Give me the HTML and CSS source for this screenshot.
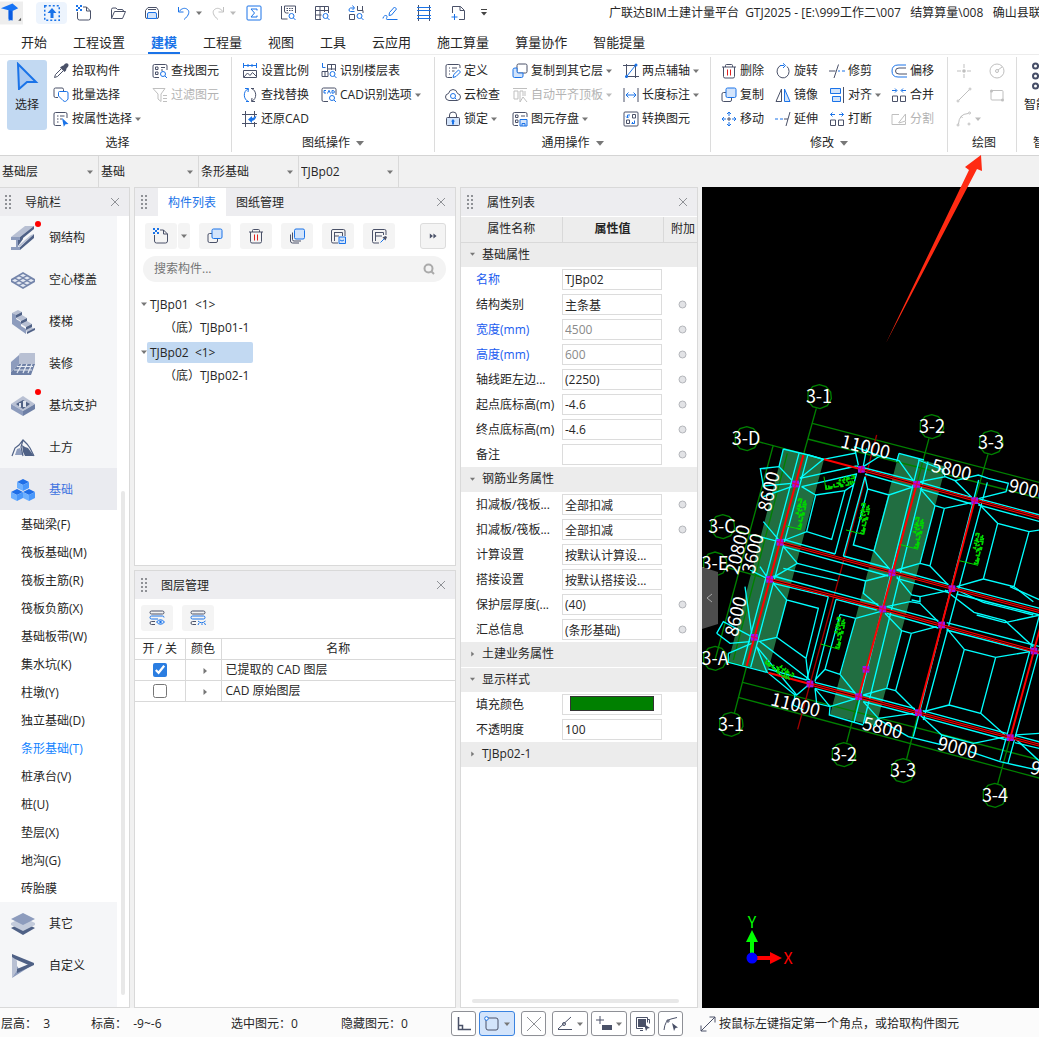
FILE: index.html
```html
<!DOCTYPE html>
<html lang="zh-CN">
<head>
<meta charset="utf-8">
<title>广联达BIM土建计量平台 GTJ2025</title>
<link rel="stylesheet" href="styles.css">
</head>
<body>
<svg class="sprite" aria-hidden="true">
  <symbol id="new" viewBox="0 0 16 16"><path class="k" d="M1.500 7v6q0 2 2 2h9q2 0 2-2V6l-4-4H7M10.500 2v4h4"/><path class="af" d="M0 0h2v2H0zM4 0h2v2H4zM2 2h2v2H2zM0 4h2v2H0zM4 4h2v2H4z"/></symbol>
  <symbol id="open" viewBox="0 0 16 16"><path class="k" d="M2.500 13.500h10l3-7H4.500l-3 7v-9q0-1.500 1.500-1.500h3l1.500 1.500H12q1.500 0 1.500 2"/></symbol>
  <symbol id="save" viewBox="0 0 16 16"><path class="k" d="M3.500 13.500H3q-1.500 0-1.500-1.500V5.500L4 2.500h8.500l2 3V12q0 1.500-1.500 1.500h-.5M4 4.500h8"/><path class="al" d="M3.500 13.500V9q0-1.500 1.500-1.500h6q1.500 0 1.500 1.500v4.500z"/></symbol>
  <symbol id="undo" viewBox="0 0 16 16"><path class="a" d="M2.500 2v5h5M3 6.500C6 3 9 2.500 11.500 4.500s1.500 6-3.500 10"/></symbol>
  <symbol id="redo" viewBox="0 0 16 16"><path class="k" d="M13.500 2v5h-5M13 6.500C10 3 7 2.500 4.500 4.500S3 10.500 8 14.500"/></symbol>
  <symbol id="sum" viewBox="0 0 16 16"><rect class="a" x="1" y="1" width="14" height="14" rx="1"/><path class="a" d="M11 5.500V4H5l3.500 4L5 12h6v-1.500"/></symbol>
  <symbol id="viewq" viewBox="0 0 16 16"><path class="k" d="M1.500 1v13h6M4.500 1h11v7M4.500 1v5q0 2 2 2h2"/><path class="k" stroke-dasharray="1.500 1" d="M6.500 3.500h7M6.500 5.500h7"/><circle class="a" cx="11.500" cy="11" r="2.500"/><path class="a" d="M13.500 13l2 2"/></symbol>
  <symbol id="gridq" viewBox="0 0 16 16"><path class="k" d="M7 14.500H1.500v-13h13V8M1.500 5.500h13M1.500 10h6M6 1.500v13M10.500 1.500V7"/><circle class="a" cx="11.500" cy="11" r="2.500"/><path class="a" d="M13.500 13l2 2"/></symbol>
  <symbol id="graphq" viewBox="0 0 16 16"><path class="k" d="M1.500 9.500h5v5h-5zM9.500 1v4.500h5.500V8M14.500 5.500V1"/><path class="a" d="M6.500 6.500h-4q-1.500 0-1.500-1.500t1.500-2H6M4.500 .500L6.500 3l-2 2"/><circle class="a" cx="11.500" cy="11" r="2.500"/><path class="a" d="M13.500 13l2 2"/></symbol>
  <symbol id="pen" viewBox="0 0 16 16"><path class="a" d="M1 13.500c0-3 4-4 4-2s-2 3 1 3h9.500M7 10.500l.5-3L12.500 2l2 2L9.500 10z"/></symbol>
  <symbol id="frame" viewBox="0 0 16 16"><path class="k" d="M2.500 0v16M13.500 0v16"/><path class="a" d="M1 2.500h14M1 5.500h14M1 10.500h14M1 13.500h14"/></symbol>
  <symbol id="addpage" viewBox="0 0 16 16"><path class="k" d="M2.500 8V1.500h8l4 4v9H9M10 1.500v4h4"/><path class="a" d="M4.500 9v6M1.500 12h6"/></symbol>
  <symbol id="up" viewBox="0 0 16 16"><path class="a" stroke-width="1.500" stroke-dasharray="2 2" d="M.75 .75h14.500v14.500H.75z"/><path class="af" d="M8 3l4.500 5H9.500v5h-3V8h-3z"/></symbol>
  <symbol id="caret" viewBox="0 0 6 6"><path class="cf" d="M0 1.500h6L3 5z"/></symbol>
  <symbol id="side" viewBox="0 0 6 6"><path class="cf" d="M1.500 0v6L5 3z"/></symbol>
  <symbol id="grip" viewBox="0 0 7 14"><path class="gf" d="M0 0h2v2H0zM4 0h2v2H4zM0 4h2v2H0zM4 4h2v2H4zM0 8h2v2H0zM4 8h2v2H4zM0 12h2v2H0zM4 12h2v2H4z"/></symbol>
  <symbol id="close" viewBox="0 0 10 10"><path class="x" d="M1 1l8 8M9 1L1 9"/></symbol>

  <symbol id="picker" viewBox="0 0 16 16"><path class="kf" d="M9 3l1.500-.5L12 .800q1.500-1 3 0 1 1.500 0 3L13.500 5.500 13 7.500 11.500 9 7 4.500z"/><path class="k" d="M8 6L2.500 11.500 1.500 14.500l3-1L10 8"/></symbol>
  <symbol id="batch" viewBox="0 0 16 16"><path class="k" d="M5 10.500H2.500q-1.500 0-1.500-1.500V2.500Q1 1 2.500 1H9q1.500 0 1.500 1.500V4"/><path class="a" d="M10 13.500L5.500 9V5.500q0-1 1-1h7q1.500 0 1.500 1.500V12q-2.500 4-5 1.500z"/></symbol>
  <symbol id="byprop" viewBox="0 0 16 16"><path class="k" d="M8 14.500H2.500q-1.500 0-1.500-1.500V3q0-1.500 1.500-1.500h10Q14 1.500 14 3v4M4 5h1.500M7 5h4.500M4 8h1.500M7 8h2M4 11h1.500"/><path class="af" d="M9 7l6.500 6-3 .3-1.700 2.500z"/></symbol>
  <symbol id="find" viewBox="0 0 16 16"><path class="k" d="M7 14.500H2.500q-1.500 0-1.500-1.500V3q0-1.500 1.500-1.500h11Q15 1.500 15 3v4M3.500 4h2.500v2.500H3.500zM3.500 9h2.500v2.500H3.500zM9 4.500h4M9 7h2"/><circle class="a" cx="11" cy="11" r="2.500"/><path class="a" d="M13 13l2 2"/></symbol>
  <symbol id="filter" viewBox="0 0 16 16"><path class="k" d="M1 1.500h12L9 7v7.500L6 12V7zM11 8.500h4M11 11.500h4M11 14.500h4"/></symbol>
  <symbol id="scale" viewBox="0 0 16 16"><path class="a" d="M1.500 0v5M14.500 0v5M1.500 2.500h13M6 1v3M10 1v3"/><path class="k" d="M1.500 7.500h13v7h-13zM2 14l3.500-4 2.500 2.500 2.500-3L14 13"/></symbol>
  <symbol id="replace" viewBox="0 0 16 16"><path class="a" d="M6.500 14.500C1 12.500 1 4 6 2M3 1.500l3.500 0L6 5M4 14.500h3"/><path class="k" d="M9.500 1.500c5.500 2 5.500 10.500.5 12.500M13 14.500l-3.500 0 .5-3.500M12 1.500H9"/></symbol>
  <symbol id="restore" viewBox="0 0 16 16"><path class="k" d="M3.500 0v16M0 3.500h15M0 12.500h15M12.500 0v6M12.500 11v5"/><path class="af" d="M6 8.500L10 5v2q3-.5 4.500-2.500-.3 4.500-4.500 5.500v2z"/></symbol>
  <symbol id="floors" viewBox="0 0 16 16"><path class="a" d="M1.500 0v4.500h3"/><path class="k" d="M6.500 1.500h8V8M10.500 1.500V7M6.500 6h8M6.500 1.500v7M1 8.500h6v5H1zM4 8.500v5"/><circle class="a" cx="11.500" cy="11" r="2.500"/><path class="a" d="M13.500 13l2 2"/></symbol>
  <symbol id="cadopt" viewBox="0 0 16 16"><path class="k" d="M7 14.500H2.500q-1.500 0-1.500-1.500V2.500Q1 1 2.500 1h11Q15 1 15 2.500V8"/><path class="a" d="M5 3.500H3v2.500h2M6.500 6.500L8 3.300l1.500 3.200M11 3.500v2.700q2.500.2 2.500-1.300T11 3.500"/><circle class="a" cx="11" cy="11" r="2.500"/><path class="a" d="M13 13l2 2"/></symbol>
  <symbol id="define" viewBox="0 0 16 16"><path class="k" d="M7 14.500H2.500q-1.500 0-1.500-1.500V3q0-1.500 1.500-1.500h11Q15 1.500 15 3v2M4 5h1M7 5h5M4 8h1M7 8h2.500M4 11h1"/><path class="a" d="M8 14.500l.8-3L13.500 7l2 2-4.500 4.500z"/></symbol>
  <symbol id="cloudq" viewBox="0 0 16 16"><path class="k" d="M4 13.500Q.5 13 .5 10t3-3.500Q4.500 2.500 8 2.500t4.500 4q3 .5 3 3.500t-3.500 3.500z"/><circle class="a" cx="8" cy="9" r="2.500"/><path class="a" d="M10 11l1.500 1.500"/></symbol>
  <symbol id="lock" viewBox="0 0 16 16"><path class="k" d="M4.500 6.500V4q0-3 3.500-3t3.500 3v2.500"/><rect class="kl" x="1.500" y="6.500" width="13" height="8" rx="1"/><path class="af" d="M8 8l2 2.500H9v3H7v-3H6z"/></symbol>
  <symbol id="copyto" viewBox="0 0 16 16"><rect class="kw" x="5" y="1" width="10" height="9" rx="1.500"/><path class="al" d="M3 5h2v3.500q0 1.500 1.500 1.500H11v3q0 1.500-1.500 1.500H2.500Q1 14.500 1 13V6.500Q1 5 3 5z"/></symbol>
  <symbol id="flush" viewBox="0 0 16 16"><path class="k" d="M1 1.500h14M2 4h4v8H2zM8 15V4h3v5M8 15l3-5 4 5M13 4v5"/></symbol>
  <symbol id="store" viewBox="0 0 16 16"><path class="k" d="M6 14.500H2.500q-1.500 0-1.500-1.500V3q0-1.500 1.500-1.500h11Q15 1.500 15 3v3M3.500 4h2.500v2.500H3.500zM3.500 9h2.500v2.500H3.500zM9 5h4"/><path class="al" d="M8 8.500h7v6.500H8zM10 15v-2.500h3V15"/></symbol>
  <symbol id="aux" viewBox="0 0 16 16"><path class="k" d="M3.500 1v14M12.500 1v14M0 2.500h14M2 13.500h14"/><path class="a" d="M4 13L12 3"/><circle class="af" cx="13" cy="2" r="1.500"/><circle class="af" cx="3.500" cy="13.500" r="1.500"/></symbol>
  <symbol id="dim" viewBox="0 0 16 16"><path class="k" d="M1 1v14M15 1v14"/><path class="a" d="M3 8h10M5.500 5.500L3 8l2.500 2.500M10.500 5.500L13 8l-2.500 2.500"/></symbol>
  <symbol id="convert" viewBox="0 0 16 16"><rect class="k" x="1" y="1" width="14" height="14" rx="1"/><path class="k" d="M9.500 3.500h3v3.500h-3zM3.500 9h3v3.500h-3z"/><path class="a" d="M7 4H4.500v3M3 5.500L4.500 7 6 5.500M9 12.500h2.500V9.500M10 11l-1.500 1.500"/></symbol>
  <symbol id="del" viewBox="0 0 16 16"><path class="k" d="M1 4h14M4.500 4V2.500q0-1 1-1h5q1 0 1 1V4M2.500 4v9.500q0 1.500 1.500 1.500h8q1.500 0 1.500-1.500V4"/><path class="r" d="M6.500 6.500v6M9.500 6.500v6"/></symbol>
  <symbol id="rotate" viewBox="0 0 16 16"><path class="k" d="M6 2.300A6 6.500 0 1 0 12 3.500"/><path class="a" d="M5 2.500h4M8 .300l2.500 2.200L8 5"/></symbol>
  <symbol id="trim" viewBox="0 0 16 16"><path class="k" d="M0 8h6.500M9.500 1.500L5 15"/><path class="a" d="M9 8h2M13 8h3"/></symbol>
  <symbol id="offset" viewBox="0 0 16 16"><path class="a" d="M15 2H7Q1 2 1 8t6 6h9"/><path class="k" d="M15 5H8q-3.500 0-3.500 3T8 11h8"/></symbol>
  <symbol id="copy" viewBox="0 0 16 16"><path class="k" d="M5 5.500H2.500Q1 5.500 1 7v6q0 1.500 1.500 1.500h6.500q1.500 0 1.500-1.500v-2"/><rect class="al" x="5" y="1" width="10" height="9.500" rx="1.500"/></symbol>
  <symbol id="mirror" viewBox="0 0 16 16"><path class="k" d="M6.500 2v12.500H1z"/><path class="al" d="M9.500 2v12.500H15z"/></symbol>
  <symbol id="align" viewBox="0 0 16 16"><path class="al" d="M1.500 1.500h10v5h-10zM3.500 9.500h8v5h-8z"/><path class="k" d="M14.500 0v16"/></symbol>
  <symbol id="merge" viewBox="0 0 16 16"><path class="k" d="M1.500 9h5v5.500h-5zM9.500 9h5v5.500h-5z"/><path class="a" d="M1 3.500h4.500M4 1.500l2 2-2 2M15 3.500h-4.500M12 1.500l-2 2 2 2"/></symbol>
  <symbol id="move" viewBox="0 0 16 16"><path class="a" d="M6 3l2-2 2 2M6 13l2 2 2-2M3 6L1 8l2 2M13 6l2 2-2 2M8 2v3M8 11v3M2 8h3M11 8h3"/><path class="k" d="M8 6v4M6 8h4"/></symbol>
  <symbol id="extend" viewBox="0 0 16 16"><path class="a" d="M0 8h3M5 8h3"/><path class="k" d="M9 8h4M15 1l-4 14"/></symbol>
  <symbol id="break" viewBox="0 0 16 16"><path class="k" d="M1.500 9h5v5.500h-5zM9.500 9h5v5.500h-5z"/><path class="a" d="M6 3.500H1.500M3.500 1.500l-2 2 2 2M10 3.500h4.500M12.500 1.500l2 2-2 2"/></symbol>
  <symbol id="split" viewBox="0 0 16 16"><path class="k" d="M8 3.500H1v10h13.500v-3M7.500 12L14.500 3v7L8 12"/></symbol>
  <symbol id="point" viewBox="0 0 16 16"><path class="k" d="M8 1v4M8 11v4M1 8h4M11 8h4"/><circle class="kf" cx="8" cy="8" r="1.800"/></symbol>
  <symbol id="circle" viewBox="0 0 16 16"><circle class="k" cx="8" cy="8" r="7"/><circle class="k" cx="8" cy="8" r="1.500"/><path class="k" d="M9 7l4-3"/></symbol>
  <symbol id="line" viewBox="0 0 16 16"><path class="k" d="M3 13L13 3"/><circle class="k" cx="2" cy="14" r="1"/><circle class="k" cx="14" cy="2" r="1"/></symbol>
  <symbol id="rect" viewBox="0 0 16 16"><rect class="k" x="2" y="3.500" width="12" height="9.500" rx="1"/><circle class="kf" cx="2.500" cy="4" r="1.500"/><circle class="kf" cx="13.500" cy="13" r="1.500"/></symbol>
  <symbol id="arc" viewBox="0 0 16 16"><path class="k" d="M2.500 13Q3 3 12 2.500"/><circle class="k" cx="2" cy="14" r="1"/><circle class="k" cx="13.500" cy="2" r="1"/><circle class="k" cx="13" cy="13" r="1"/><path class="k" d="M5 5l1.500 2"/></symbol>
  <symbol id="multi" viewBox="0 0 16 16"><path class="k" d="M3.500 4.500v7q0 1.500 1.500 1.500h7M1.500 6.500V13q0 2 2 2H10"/><rect class="al" x="5.500" y="1" width="10" height="10" rx="1.500"/></symbol>
  <symbol id="fsave" viewBox="0 0 16 16"><path class="k" d="M8 15H3q-1.500 0-1.500-1.500V3q0-1.500 1.500-1.500h10.500Q15 1.500 15 3v5M4.500 13V4M4.500 4.500h8V8M4.500 8H9"/><path class="al" d="M9 9h6.500v6.500H9z"/><path class="a" d="M10 12q2 2 4 0"/></symbol>
  <symbol id="fpick" viewBox="0 0 16 16"><path class="k" d="M8 15H3q-1.500 0-1.500-1.500V3q0-1.500 1.500-1.500h10.500Q15 1.500 15 3v4M4.500 13V4M4.500 4.500h8V7M4.500 8H11"/><path class="kf" d="M11.500 9.500l3-1.500 1.500 1-1.500 3.500z"/><path class="a" d="M13 11l-3.500 3.500"/></symbol>
  <symbol id="ff" viewBox="0 0 10 8"><path class="kf" d="M1 1l4 3-4 3zM5.500 1l4 3-4 3z"/></symbol>
  <symbol id="search" viewBox="0 0 12 12"><circle class="g" cx="5.500" cy="5.500" r="4"/><path class="g" d="M8.500 8.500l2.500 2.500"/></symbol>
  <symbol id="layeron" viewBox="0 0 16 16"><rect class="k" x="1" y="1" width="14" height="3" rx="1.500"/><path class="a" d="M9 9H2.500Q1 9 1 7.500T2.500 6h11Q15 6 15 7.500"/><path class="k" d="M6 14.500H2.500Q1 14.500 1 13t1.500-1.500H6"/><path class="al" d="M7.500 12Q11.500 7.500 15.500 12 11.500 16.500 7.500 12z"/><circle class="af" cx="11.500" cy="12" r="1.200"/></symbol>
  <symbol id="layeroff" viewBox="0 0 16 16"><rect class="k" x="1" y="1" width="14" height="3" rx="1.500"/><rect class="a" x="1" y="6" width="14" height="3" rx="1.500"/><path class="k" d="M6 14.500H2.500Q1 14.500 1 13t1.500-1.500H6"/><path class="a" d="M8 11q3.500 3.500 7.500 0M9 13l-1 2M12 13.500V15M14.500 13l1 2"/></symbol>
  <symbol id="arrow" viewBox="0 0 24 28"><path class="ab" d="M3 2l18 18H12L4 27z"/></symbol>
  <symbol id="ring" viewBox="0 0 9 9"><circle cx="4.500" cy="4.500" r="3.500" fill="#e2e3e6" stroke="#b4b6bb"/></symbol>

  <symbol id="n-steel" viewBox="0 0 24 24"><path fill="#b8c0d3" d="M0 11L14 0h9L9 11z"/><path fill="#8d9cbd" d="M0 11h9v3H7v7H5v-7H0zM0 21h9v3H0z"/><path fill="#4f6186" d="M9 11L23 0v3L12 12v1l-5 7v-6h2zM9 21L23 8v4L9 24z"/><path fill="#b8c0d3" d="M7 20L20 9l3-1L9 21z"/></symbol>
  <symbol id="n-slab" viewBox="0 0 24 18"><path fill="#7485ab" d="M0 8L12 1l12 7v3l-12 7L0 11z"/><g fill="#e4e9f2"><path d="M12 3l3 1.500L12 6 9 4.500zM8 5.500L11 7 8 8.500 5 7zM16 5.500L19 7l-3 1.500L13 7zM12 8l3 1.500-3 1.500-3-1.500zM4 8l3 1.500L4 11 1 9.500zM20 8l3 1.500-3 1.500-3-1.500zM8 10.500l3 1.500-3 1.500L5 12zM16 10.500l3 1.500-3 1.500-3-1.500zM12 13l3 1.500-3 1.500-3-1.500z"/></g></symbol>
  <symbol id="n-stair" viewBox="0 0 24 24"><path fill="#8d9cbd" d="M1 3l4 1v5l5 3v4l5 3v5L1 14z"/><path fill="#b8c0d3" d="M1 3l6-3 4 2-6 3zM5 8l6-3 5 3-6 3zM10 14l6-3 5 3-6 3zM15 20l5-3 4 2-8 4z"/><path fill="#4f6186" d="M5 5l6-3v3L5 8zM10 11l6-3v3l-6 3zM15 17l6-3v3l-6 3zM16 22l8-4v2l-8 4z"/></symbol>
  <symbol id="n-deco" viewBox="0 0 24 22"><path fill="#b8c0d3" d="M8 2q0-2 2-2h14v12H8z"/><path fill="#8d9cbd" d="M8 2v9L0 19V9z"/><path fill="#6e80a6" d="M8 11h16l-4 11H0v-3z"/><path stroke="#e4e9f2" fill="none" stroke-width="1.200" d="M6 13.500h16M3 17h18M11 11l-5 9M16 11l-4 9M21 11l-4 9"/></symbol>
  <symbol id="n-pit" viewBox="0 0 24 20"><path fill="#b8c0d3" d="M12 0l12 8-12 7L0 8z"/><path fill="#4f6186" d="M12 4l7 4-7 5-7-5z"/><path fill="#8d9cbd" d="M0 8l12 7v5L0 13z"/><path fill="#6e80a6" d="M24 8l-12 7v5l12-7z"/><path fill="#dfe4ee" d="M8 7h2v4H8zM12 5h3v6h-3z"/></symbol>
  <symbol id="n-earth" viewBox="0 0 24 18"><path fill="#8d9cbd" d="M4 16L6 10l3-1 3 7z"/><path fill="#4f6186" d="M11 6l3 2 3 1 6 8H14l-2-4z"/><path fill="none" stroke="#4f6186" stroke-width="1.200" d="M1 17l3-8 4-3 4-5 4 4 3 4 4 8M12 1L10 8l2 9"/></symbol>
  <symbol id="n-base" viewBox="0 0 24 22"><g id="cube"><path fill="#1f6fe8" d="M12 0l6 3-6 3-6-3z"/><path fill="#6db0ff" d="M6 3l6 3v6L6 9z"/><path fill="#4a98fb" d="M18 3l-6 3v6l6-3z"/></g><use href="#cube" x="-6" y="10"/><use href="#cube" x="6" y="10"/></symbol>
  <symbol id="n-other" viewBox="0 0 24 22"><path fill="#4f6186" d="M0 15l12-6 12 6-12 7z"/><path fill="#c3cbdb" d="M0 10l12-6 12 6v2l-12 6L0 12z"/><path fill="#8d9cbd" d="M0 6l12-6 12 6-12 6z"/></symbol>
  <symbol id="n-custom" viewBox="0 0 24 24"><path fill="#b8c0d3" d="M1 1l5 6v9l-5 8z"/><path fill="#4f6186" d="M1 0l22 9-3 3L6 6 4 5 1 3z"/><path fill="#8d9cbd" d="M23 10L1 24l5-8V12l2 3 9-4z"/><path fill="#4f6186" d="M23 9v2L6 19v-4l12-5z"/></symbol>

  <symbol id="ortho" viewBox="0 0 16 16"><path class="k" stroke-width="1.500" d="M2.500 1v12.500H15M2.500 9.500h4v4"/></symbol>
  <symbol id="box" viewBox="0 0 16 16"><rect class="k" x="2" y="2" width="12" height="12" rx="2"/><circle cx="2.500" cy="2.500" r="1.800" fill="#fff" stroke="#1a73e8"/></symbol>
  <symbol id="cross" viewBox="0 0 16 16"><path class="x" d="M1 1l14 14M15 1L1 15"/></symbol>
  <symbol id="angle" viewBox="0 0 16 16"><path class="k" d="M1 13L14 1M1 13.500h14"/><circle class="k" cx="7" cy="8" r="1.500"/></symbol>
  <symbol id="plus" viewBox="0 0 16 16"><path class="k" d="M4 0v8M0 4h8"/><path class="kf" d="M6 9h10v5H6z"/></symbol>
  <symbol id="pickbox" viewBox="0 0 16 16"><path class="kf" d="M3 3h8v8H3z"/><path class="k" d="M1.500 1.500h11v5M1.500 1.500v11H8M5 14.500h3M12.500 3.500h2v4"/><path class="kf" d="M9 8l6 4-2.500.5L11 15z"/></symbol>
  <symbol id="polyarc" viewBox="0 0 16 16"><path class="k" d="M1 14Q2 4 8 3l6-1.500"/><circle class="k" cx="5" cy="5" r="1.200"/><path class="kf" d="M9 7l6 4.500-2.500.5L11 15z"/></symbol>
  <symbol id="expand" viewBox="0 0 16 16"><path class="k" d="M1 15L15 1M9.500 1H15v5.500M1 9.500V15h5.500"/></symbol>
</svg>

<header class="title">
  <svg class="logo" viewBox="0 0 24 24"><path fill="#eee" d="M0 0h24v24H0z"/><path fill="#1673f5" d="M1 7L13 2l6 5-6 3v9l-4 1V9z"/><path fill="#0a5be0" d="M13 10l-4-1 0 9 4 2z"/><path fill="#555" d="M22 17v3h-3z"/></svg>
  <nav class="quick">
    <button class="on" aria-label="置顶"><svg class="i"><use href="#up"/></svg></button>
    <button aria-label="新建"><svg class="i"><use href="#new"/></svg></button>
    <button aria-label="打开"><svg class="i"><use href="#open"/></svg></button>
    <button aria-label="保存"><svg class="i"><use href="#save"/></svg></button>
    <button class="pair" aria-label="撤销"><svg class="i"><use href="#undo"/></svg><svg class="c"><use href="#caret"/></svg></button>
    <button class="pair off" aria-label="恢复"><svg class="i"><use href="#redo"/></svg><svg class="c"><use href="#caret"/></svg></button>
    <button aria-label="汇总"><svg class="i"><use href="#sum"/></svg></button>
    <button aria-label="查看"><svg class="i"><use href="#viewq"/></svg></button>
    <button aria-label="报表"><svg class="i"><use href="#gridq"/></svg></button>
    <button aria-label="查量"><svg class="i"><use href="#graphq"/></svg></button>
    <button aria-label="编辑"><svg class="i"><use href="#pen"/></svg></button>
    <button aria-label="框架"><svg class="i"><use href="#frame"/></svg></button>
    <button aria-label="添加"><svg class="i"><use href="#addpage"/></svg></button>
    <button class="last" aria-label="更多"><svg class="more" viewBox="0 0 6 8"><path d="M0 .5h6" stroke="#444"/><path d="M0 3h6L3 6.500z" fill="#444"/></svg></button>
  </nav>
  <h1>广联达BIM土建计量平台&nbsp; GTJ2025 - [E:\999工作二\007&nbsp;&nbsp; 结算算量\008&nbsp;&nbsp; 确山县联</h1>
</header>

<nav class="tabs">
  <a href="#">开始</a><a href="#">工程设置</a><a href="#" class="cur">建模</a><a href="#">工程量</a><a href="#">视图</a><a href="#">工具</a><a href="#">云应用</a><a href="#">施工算量</a><a href="#">算量协作</a><a href="#">智能提量</a>
</nav>

<section class="ribbon">
  <div class="grp g1">
    <button class="big"><svg><use href="#arrow"/></svg>选择</button>
    <div class="cmds">
      <button><svg class="i"><use href="#picker"/></svg>拾取构件</button>
      <button><svg class="i"><use href="#find"/></svg>查找图元</button>
      <button><svg class="i"><use href="#batch"/></svg>批量选择</button>
      <button class="off"><svg class="i"><use href="#filter"/></svg>过滤图元</button>
      <button><svg class="i"><use href="#byprop"/></svg>按属性选择<svg class="c"><use href="#caret"/></svg></button>
    </div>
    <div class="lab">选择</div>
  </div>
  <div class="grp g2">
    <div class="cmds">
      <button><svg class="i"><use href="#scale"/></svg>设置比例</button>
      <button><svg class="i"><use href="#floors"/></svg>识别楼层表</button>
      <button><svg class="i"><use href="#replace"/></svg>查找替换</button>
      <button><svg class="i"><use href="#cadopt"/></svg>CAD识别选项<svg class="c"><use href="#caret"/></svg></button>
      <button><svg class="i"><use href="#restore"/></svg>还原CAD</button>
    </div>
    <div class="lab">图纸操作<svg class="c"><use href="#caret"/></svg></div>
  </div>
  <div class="grp g3">
    <div class="cmds">
      <button><svg class="i"><use href="#define"/></svg>定义</button>
      <button><svg class="i"><use href="#copyto"/></svg>复制到其它层<svg class="c"><use href="#caret"/></svg></button>
      <button><svg class="i"><use href="#aux"/></svg>两点辅轴<svg class="c"><use href="#caret"/></svg></button>
      <button><svg class="i"><use href="#cloudq"/></svg>云检查</button>
      <button class="off"><svg class="i"><use href="#flush"/></svg>自动平齐顶板<svg class="c"><use href="#caret"/></svg></button>
      <button><svg class="i"><use href="#dim"/></svg>长度标注<svg class="c"><use href="#caret"/></svg></button>
      <button><svg class="i"><use href="#lock"/></svg>锁定<svg class="c"><use href="#caret"/></svg></button>
      <button><svg class="i"><use href="#store"/></svg>图元存盘<svg class="c"><use href="#caret"/></svg></button>
      <button><svg class="i"><use href="#convert"/></svg>转换图元</button>
    </div>
    <div class="lab">通用操作<svg class="c"><use href="#caret"/></svg></div>
  </div>
  <div class="grp g4">
    <div class="cmds">
      <button><svg class="i"><use href="#del"/></svg>删除</button>
      <button><svg class="i"><use href="#rotate"/></svg>旋转</button>
      <button><svg class="i"><use href="#trim"/></svg>修剪</button>
      <button><svg class="i"><use href="#offset"/></svg>偏移</button>
      <button><svg class="i"><use href="#copy"/></svg>复制</button>
      <button><svg class="i"><use href="#mirror"/></svg>镜像</button>
      <button><svg class="i"><use href="#align"/></svg>对齐<svg class="c"><use href="#caret"/></svg></button>
      <button><svg class="i"><use href="#merge"/></svg>合并</button>
      <button><svg class="i"><use href="#move"/></svg>移动</button>
      <button><svg class="i"><use href="#extend"/></svg>延伸</button>
      <button><svg class="i"><use href="#break"/></svg>打断</button>
      <button class="off"><svg class="i"><use href="#split"/></svg>分割</button>
    </div>
    <div class="lab">修改<svg class="c"><use href="#caret"/></svg></div>
  </div>
  <div class="grp g5">
    <div class="cmds">
      <button class="off" aria-label="点"><svg class="i"><use href="#point"/></svg></button>
      <button class="off" aria-label="圆"><svg class="i"><use href="#circle"/></svg></button>
      <button class="off" aria-label="直线"><svg class="i"><use href="#line"/></svg></button>
      <button class="off" aria-label="矩形"><svg class="i"><use href="#rect"/></svg></button>
      <button class="off" aria-label="弧"><svg class="i"><use href="#arc"/></svg><svg class="c"><use href="#caret"/></svg></button>
    </div>
    <div class="lab">绘图</div>
  </div>
  <div class="grp g6">
    <button class="big"><svg viewBox="0 0 24 28"><g fill="none" stroke="#454d66" stroke-width="2"><circle cx="3.500" cy="4" r="2.500"/><circle cx="3.500" cy="14" r="2.500"/><circle cx="3.500" cy="24" r="2.500"/><path d="M6 4h17M6 14h17M6 24h17"/></g></svg>智能布置</button>
    <div class="lab">智能布置</div>
  </div>
</section>

<div class="combos">
  <label><select aria-label="楼层"><option>基础层</option></select><svg class="c"><use href="#caret"/></svg></label>
  <label><select aria-label="构件类型"><option>基础</option></select><svg class="c"><use href="#caret"/></svg></label>
  <label><select aria-label="构件"><option>条形基础</option></select><svg class="c"><use href="#caret"/></svg></label>
  <label><select aria-label="名称"><option>TJBp02</option></select><svg class="c"><use href="#caret"/></svg></label>
</div>

<main>
  <aside class="panel nav">
    <header><svg class="grip"><use href="#grip"/></svg><h2>导航栏</h2><button class="close" aria-label="关闭"><svg><use href="#close"/></svg></button></header>
    <div class="scroll">
      <div class="tree">
        <a href="#" class="cat new"><svg><use href="#n-steel"/></svg>钢结构</a>
        <a href="#" class="cat"><svg><use href="#n-slab"/></svg>空心楼盖</a>
        <a href="#" class="cat"><svg><use href="#n-stair"/></svg>楼梯</a>
        <a href="#" class="cat"><svg><use href="#n-deco"/></svg>装修</a>
        <a href="#" class="cat new"><svg><use href="#n-pit"/></svg>基坑支护</a>
        <a href="#" class="cat"><svg><use href="#n-earth"/></svg>土方</a>
        <a href="#" class="cat cur"><svg><use href="#n-base"/></svg>基础</a>
        <ul>
          <li><a href="#">基础梁(F)</a></li><li><a href="#">筏板基础(M)</a></li><li><a href="#">筏板主筋(R)</a></li><li><a href="#">筏板负筋(X)</a></li><li><a href="#">基础板带(W)</a></li><li><a href="#">集水坑(K)</a></li><li><a href="#">柱墩(Y)</a></li><li><a href="#">独立基础(D)</a></li><li><a href="#" class="cur">条形基础(T)</a></li><li><a href="#">桩承台(V)</a></li><li><a href="#">桩(U)</a></li><li><a href="#">垫层(X)</a></li><li><a href="#">地沟(G)</a></li><li><a href="#">砖胎膜</a></li>
        </ul>
        <a href="#" class="cat"><svg><use href="#n-other"/></svg>其它</a>
        <a href="#" class="cat"><svg><use href="#n-custom"/></svg>自定义</a>
      </div>
      <div class="bar"><i></i></div>
    </div>
  </aside>

  <div class="mid">
    <section class="panel comps">
      <header><svg class="grip"><use href="#grip"/></svg><a href="#" class="tab cur">构件列表</a><a href="#" class="tab">图纸管理</a><button class="close" aria-label="关闭"><svg><use href="#close"/></svg></button></header>
      <div class="tools">
        <div class="split"><button aria-label="新建"><svg class="i"><use href="#new"/></svg></button><button class="drop" aria-label="新建选项"><svg class="c"><use href="#caret"/></svg></button></div>
        <button aria-label="复制"><svg class="i"><use href="#copy"/></svg></button>
        <button aria-label="删除"><svg class="i"><use href="#del"/></svg></button>
        <button aria-label="层间复制"><svg class="i"><use href="#multi"/></svg></button>
        <button aria-label="存档"><svg class="i"><use href="#fsave"/></svg></button>
        <button aria-label="提取"><svg class="i"><use href="#fpick"/></svg></button>
        <button class="ff" aria-label="更多"><svg><use href="#ff"/></svg></button>
      </div>
      <label class="search"><input type="text" aria-label="搜索构件" placeholder="搜索构件..."><svg><use href="#search"/></svg></label>
      <ul class="items">
        <li><svg class="c"><use href="#caret"/></svg><span>TJBp01&nbsp; &lt;1&gt;</span></li>
        <li class="sub">（底）TJBp01-1</li>
        <li><svg class="c"><use href="#caret"/></svg><span class="sel">TJBp02&nbsp; &lt;1&gt;</span></li>
        <li class="sub">（底）TJBp02-1</li>
      </ul>
    </section>
    <section class="panel layers">
      <header><svg class="grip"><use href="#grip"/></svg><h2>图层管理</h2><button class="close" aria-label="关闭"><svg><use href="#close"/></svg></button></header>
      <div class="tools">
        <button aria-label="显示图层"><svg class="i"><use href="#layeron"/></svg></button>
        <button aria-label="隐藏图层"><svg class="i"><use href="#layeroff"/></svg></button>
      </div>
      <table>
        <thead><tr><th class="c1">开 / 关</th><th class="c2">颜色</th><th>名称</th></tr></thead>
        <tbody>
          <tr><td class="mid-cell"><input type="checkbox" checked aria-label="已提取的 CAD 图层"></td><td class="mid-cell"><svg class="c"><use href="#side"/></svg></td><td>已提取的 CAD 图层</td></tr>
          <tr><td class="mid-cell"><input type="checkbox" aria-label="CAD 原始图层"></td><td class="mid-cell"><svg class="c"><use href="#side"/></svg></td><td>CAD 原始图层</td></tr>
        </tbody>
      </table>
    </section>
  </div>

  <section class="panel props">
    <header><svg class="grip"><use href="#grip"/></svg><h2>属性列表</h2><button class="close" aria-label="关闭"><svg><use href="#close"/></svg></button></header>
    <table>
      <thead><tr><th class="p1">属性名称</th><th class="p2"><b>属性值</b></th><th class="p3">附加</th></tr></thead>
      <tbody>
        <tr class="sec"><td colspan="3"><svg class="c"><use href="#caret"/></svg>基础属性</td></tr>
        <tr><td class="blue"><label for="f1">名称</label></td><td><input id="f1" value="TJBp02"></td><td></td></tr>
        <tr><td><label for="f2">结构类别</label></td><td><input id="f2" value="主条基"></td><td><svg class="ring"><use href="#ring"/></svg></td></tr>
        <tr><td class="blue"><label for="f3">宽度(mm)</label></td><td><input id="f3" class="dim" value="4500"></td><td><svg class="ring"><use href="#ring"/></svg></td></tr>
        <tr><td class="blue"><label for="f4">高度(mm)</label></td><td><input id="f4" class="dim" value="600"></td><td><svg class="ring"><use href="#ring"/></svg></td></tr>
        <tr><td><label for="f5">轴线距左边...</label></td><td><input id="f5" value="(2250)"></td><td><svg class="ring"><use href="#ring"/></svg></td></tr>
        <tr><td><label for="f6">起点底标高(m)</label></td><td><input id="f6" value="-4.6"></td><td><svg class="ring"><use href="#ring"/></svg></td></tr>
        <tr><td><label for="f7">终点底标高(m)</label></td><td><input id="f7" value="-4.6"></td><td><svg class="ring"><use href="#ring"/></svg></td></tr>
        <tr><td><label for="f8">备注</label></td><td><input id="f8" value=""></td><td><svg class="ring"><use href="#ring"/></svg></td></tr>
        <tr class="sec"><td colspan="3"><svg class="c"><use href="#caret"/></svg>钢筋业务属性</td></tr>
        <tr><td><label for="f9">扣减板/筏板...</label></td><td><input id="f9" value="全部扣减"></td><td><svg class="ring"><use href="#ring"/></svg></td></tr>
        <tr><td><label for="f10">扣减板/筏板...</label></td><td><input id="f10" value="全部扣减"></td><td><svg class="ring"><use href="#ring"/></svg></td></tr>
        <tr><td><label for="f11">计算设置</label></td><td><input id="f11" value="按默认计算设..."></td><td></td></tr>
        <tr><td><label for="f12">搭接设置</label></td><td><input id="f12" value="按默认搭接设..."></td><td></td></tr>
        <tr><td><label for="f13">保护层厚度(...</label></td><td><input id="f13" value="(40)"></td><td><svg class="ring"><use href="#ring"/></svg></td></tr>
        <tr><td><label for="f14">汇总信息</label></td><td><input id="f14" value="(条形基础)"></td><td><svg class="ring"><use href="#ring"/></svg></td></tr>
        <tr class="sec"><td colspan="3"><svg class="c"><use href="#side"/></svg>土建业务属性</td></tr>
        <tr class="sec"><td colspan="3"><svg class="c"><use href="#caret"/></svg>显示样式</td></tr>
        <tr><td>填充颜色</td><td><button class="swatch" aria-label="填充颜色"><i></i></button></td><td></td></tr>
        <tr><td><label for="f15">不透明度</label></td><td><input id="f15" value="100"></td><td></td></tr>
        <tr class="sec"><td colspan="3"><svg class="c"><use href="#side"/></svg>TJBp02-1</td></tr>
      </tbody>
    </table>
    <div class="hbar"></div>
  </section>

  <section class="view">
    <svg class="cad" aria-label="平面图">
      <defs>
        <g id="node"><path fill="#9a12f0" d="M-10-10h20v20h-20z"/><path stroke="#e00050" stroke-width="4" d="M-11-3L11 3M3-11L-3 11"/></g>
        <path id="bub" d="M0-36L20-30 34-14 36 6 24 27 2 36-20 30-34 12-34-12-20-30z"/>
        <path id="note" d="M2-2h20M4-14v14M12-12v8h10M10-6h14M28-14v12M30-4h12M36-14h8v8M46-2h10M48-14v8h8M56-16l6 6M62-3h10v-10M66-16h6M76-4h8M78-14v8M84-14v6h8M44-20h8M48-28v8M54-20h8v-8M66-20h10M68-28l6 8M80-20h12v-8M84-28h8M76-26v8"/>
      </defs>
      <g transform="translate(-2 183) scale(.33333)" fill="none" stroke-width="3">
        <path fill="#216e41" d="M250 237L372 268 203 907 85 875zM597 250L737 290 528 1068 390 1035z"/>
        <g stroke="#008000" stroke-width="4">
          <path d="M349 115L310 255M337 160L1020 338M323 207L1020 385M687 205L650 343M864 253L824 392M175 215L372 268M220 225L45 870M262 250L100 870M100 480L240 517M80 592L209 628M140 888L103 1030M128 937L1020 1170M115 982L1020 1225M476 980L440 1118M655 1028L620 1167M931 1103L893 1242M80 875L140 890"/>
          <use href="#bub" x="358" y="80"/><use href="#bub" x="695" y="170"/><use href="#bub" x="873" y="218"/><use href="#bub" x="140" y="206"/><use href="#bub" x="68" y="470"/><use href="#bub" x="45" y="582"/><use href="#bub" x="45" y="865"/><use href="#bub" x="93" y="1063"/><use href="#bub" x="431" y="1154"/><use href="#bub" x="609" y="1202"/><use href="#bub" x="884" y="1276"/>
        </g>
        <path stroke="#a00000" stroke-width="4" d="M530 195L434 560 330 942 293 1078"/>
        <g stroke="#0ff" stroke-width="4">
          <path d="M297 250L128 885M323 257L152 892M658 268L462 1058M684 275L490 1062M836 330L640 1100M862 337L670 1050M1020 730L900 1172M1020 830L924 1180M250 237L237 290M597 250L590 275M250 237L325 255 372 268"/>
          <path d="M470 288L640 331M655 335L815 382M835 386L1020 435M495 312L640 353M665 358L815 402M835 405L1020 455M250 508L405 552M430 558L565 594M590 600L745 643M770 650L1020 715M250 530L565 618M590 625L745 668M770 672L1020 735M220 618L535 703M560 710L715 752M740 758L1020 830M220 640L385 680M408 688L530 720M560 730L715 774M740 780L990 845M205 897L320 930M345 937L465 968M490 975L645 1016M668 1022L920 1090M945 1096L1020 1116M345 955L465 988M490 995L645 1035M670 1042L920 1110M945 1118L1020 1136"/>
          <path d="M200 296H181L190 348 275 340M181 296L237 290 275 330M325 255L370 268 467 249 475 285M370 268L300 325 470 288M305 350L470 312M463 230L475 285M500 235L490 288M463 230L540 258 490 290M540 258L597 272 640 332M655 270L730 300 735 320 660 335M735 320L765 332 815 382M765 332L835 315 865 325 925 340 918 365 838 385M597 250L672 270"/>
          <path d="M305 350L347 375 435 362 460 345M347 375L320 485 395 508 435 362M320 485L255 510M275 350L190 380M190 455L235 508M180 500L235 515M470 310L405 552M495 320L430 558M495 320L503 357 567 375 635 352M567 375L522 543 460 525 503 357M522 543L570 598M660 355L705 407 733 415 815 398M705 407L660 580 690 588 733 415M660 580L590 600M690 588L745 645M835 400L893 460 987 485 1020 480M893 460L850 627 942 650 987 485M850 627L770 650M942 650L1000 695"/>
          <path d="M250 530L292 580 220 622M292 580L497 633 565 615M497 633L490 670 540 712M250 595L412 632M150 600L200 625M180 590L200 620M590 620L635 675 660 680V695L635 690M660 680L745 662M770 660L850 697 1000 735M220 640L260 690 355 715 318 865 230 802 260 690M230 802L175 815M318 865L325 930M170 830L290 975 325 945M180 815L330 930M170 830L200 905 285 975 280 1005 310 1020M50 790L70 755 155 800M50 790L90 820 150 815M85 850L155 820M85 850V877L200 907M135 650L155 790"/>
          <path d="M385 680L320 930M408 688L345 935M408 735M420 733L375 898 345 930M420 733L467 745 540 725M467 745L420 913 375 898M420 913L470 975M345 955L350 1000 390 1010 470 985M345 955L390 1010 388 1035 490 1065M490 995L535 1045 640 1030M535 1045L520 1070M535 1048L625 1100 720 1123 725 1095 660 1035M725 1095L820 1120 920 1100M810 1145L900 1175 1020 1202M945 1095L1020 1090M945 1105L1020 1175"/>
          <path d="M555 730L605 782 634 790 710 770M605 782L560 955 587 962 634 790M560 955L490 975M587 962L645 1020M740 775L793 838 887 862 990 845M793 838L747 1005 842 1030 887 862M747 1005L670 1025M842 1030L915 1095M735 660L822 727 915 752 1000 830M830 735L915 758 1020 735M560 710L630 695 660 700 715 755M930 650L1020 690"/>
        </g>
        <path stroke="#f00" stroke-width="6" d="M310 255L140 888M650 343L476 980M824 392L655 1028M1020 775L931 1103M372 268L484 298M205 908L330 942"/>
        <path stroke="#f00" stroke-width="9" d="M484 298L1020 443M240 517L1020 725M209 628L548 717 1020 848M330 942L1020 1126"/>
        <path stroke="#300" stroke-width="3" d="M484 298L1020 443M240 517L1020 725M209 628L548 717 1020 848M330 942L1020 1126"/>
        <use href="#node" x="287" y="342"/><use href="#node" x="484" y="298"/><use href="#node" x="650" y="343"/><use href="#node" x="824" y="392"/><use href="#node" x="240" y="517"/><use href="#node" x="576" y="608"/><use href="#node" x="756" y="656"/><use href="#node" x="209" y="628"/><use href="#node" x="548" y="717"/><use href="#node" x="725" y="765"/><use href="#node" x="1002" y="843"/><use href="#node" x="163" y="802"/><use href="#node" x="498" y="898"/><use href="#node" x="476" y="980"/><use href="#node" x="330" y="942"/><use href="#node" x="655" y="1028"/><use href="#node" x="931" y="1103"/>
        <g stroke="#00d800" stroke-width="5">
          <use href="#note" transform="translate(302 482) rotate(-76)"/><use href="#note" transform="translate(492 496) rotate(-76)"/><use href="#note" transform="translate(654 538) rotate(-76)"/><use href="#note" transform="translate(834 586) rotate(-76)"/><use href="#note" transform="translate(418 838) rotate(-76)"/><use href="#note" transform="translate(376 360) rotate(-10)"/><use href="#note" transform="translate(192 878) rotate(38)"/>
          <path stroke-width="3" d="M258 468L302 478M438 480L490 493M602 524L654 538M778 572L834 586M362 822L418 838M372 320L378 360"/>
        </g>
      </g>
      <g class="num">
        <text x="117" y="216">3-1</text><text x="230" y="246">3-2</text><text x="289" y="262">3-3</text><text x="44" y="258">3-D</text><text x="20" y="346">3-C</text><text x="13" y="383">3-E</text><text x="13" y="478">3-A</text><text x="29" y="544">3-1</text><text x="142" y="574">3-2</text><text x="201" y="590">3-3</text><text x="293" y="615">3-4</text>
        <text transform="translate(162 266) rotate(14)">11000</text><text transform="translate(248 289) rotate(14)">5800</text><text transform="translate(325 309) rotate(14)">9000</text>
        <text transform="translate(73 306) rotate(-76)">8600</text><text transform="translate(42 364) rotate(-76)">20800</text><text transform="translate(57 368) rotate(-76)">3600</text><text transform="translate(40 431) rotate(-76)">8600</text>
        <text transform="translate(92 524) rotate(14)">11000</text><text transform="translate(179 547) rotate(14)">5800</text><text transform="translate(254 567) rotate(14)">9000</text><text transform="translate(347 591) rotate(14)">9000</text>
      </g>
      <g class="ucs"><path fill="#0f0" d="M48 770V755H44L50 743 56 755H52V770z"/><path fill="#f00" d="M50 769H68V765L80 771 68 777V773H50z"/><circle cx="50" cy="771" r="5.500" fill="#00f"/><text x="50" y="741" fill="#0f0">Y</text><text x="86" y="777" fill="#f00">X</text></g>
    </svg>
    <button class="handle" aria-label="展开"><svg viewBox="0 0 16 62"><path fill="#4d4d4d" d="M0 0L16 5V57L0 62z"/><path fill="none" stroke="#aaa" d="M10 27L5 31 10 35"/></svg></button>
    <svg class="pointer" viewBox="0 0 100 192"><path fill="#ff2a12" d="M0 190L83 17 79 14 95 2 96 18 91 16z"/></svg>
  </section>
</main>

<footer class="status">
  <span class="s1">层高：&nbsp;&nbsp;3</span><span class="s2">标高：&nbsp;&nbsp;-9~-6</span><span class="s3">选中图元：0</span><span class="s4">隐藏图元：0</span>
  <div class="snap">
    <button aria-label="正交"><svg class="i"><use href="#ortho"/></svg></button>
    <button class="wide on" aria-label="矩形框选"><svg class="i"><use href="#box"/></svg><svg class="c"><use href="#caret"/></svg></button>
    <button class="far" aria-label="交点"><svg class="i"><use href="#cross"/></svg></button>
    <button class="wide far" aria-label="角度"><svg class="i"><use href="#angle"/></svg><svg class="c"><use href="#caret"/></svg></button>
    <button class="wide" aria-label="偏移输入"><svg class="i"><use href="#plus"/></svg><svg class="c"><use href="#caret"/></svg></button>
    <button aria-label="选择构件"><svg class="i"><use href="#pickbox"/></svg></button>
    <button aria-label="弧线"><svg class="i"><use href="#polyarc"/></svg></button>
  </div>
  <svg class="i"><use href="#expand"/></svg>
  <span class="hint">按鼠标左键指定第一个角点，或拾取构件图元</span>
</footer>
</body>
</html>
```
FILE: styles.css
```css
* { box-sizing: border-box; }
:root { --ink: #4a5168; --accent: #1a73e8; --tint: #d3e4fb; --caret: #777; --line: #d9d9d9; }
html, body { height: 100%; }
body {
  margin: 0; display: flex; flex-direction: column; overflow: hidden;
  background: #f1f1f1; color: #262626;
  font: 12px/16px "Open Sans", "Noto Sans CJK SC", sans-serif;
}
button { font: inherit; color: inherit; background: none; border: 0; padding: 0; margin: 0; display: flex; align-items: center; white-space: nowrap; }
a { color: inherit; text-decoration: none; }
h1, h2 { margin: 0; font-size: 12px; font-weight: 400; white-space: nowrap; }
ul { list-style: none; margin: 0; padding: 0; }
table { border-collapse: collapse; }
th { font-weight: 400; }
.sprite { position: absolute; width: 0; height: 0; }
.i { width: 16px; height: 16px; flex: none; }
.c { width: 6px; height: 6px; flex: none; }

.k { fill: none; stroke: var(--ink); }
.kf { fill: var(--ink); }
.kl { fill: var(--tint); stroke: var(--ink); }
.kw { fill: #fff; stroke: var(--ink); }
.a { fill: none; stroke: var(--accent); }
.af { fill: var(--accent); }
.al { fill: var(--tint); stroke: var(--accent); }
.ab { fill: #a9c9f2; stroke: #1a73e8; stroke-width: 2; }
.cf { fill: var(--caret); }
.r { fill: none; stroke: #e02020; }
.g { fill: none; stroke: #aaa; stroke-width: 2; }
.gf { fill: #8f9196; }
.x { fill: none; stroke: #8f9196; }
.off { --ink: #bfbfbf; --accent: #bfbfbf; --caret: #bbb; color: #b3b3b3; }

.title { flex: none; display: flex; align-items: center; height: 25px; background: #fff; overflow: hidden; }
.logo { flex: none; width: 23px; height: 24px; }
.quick { flex: none; display: flex; margin-left: 13px; width: 573px; }
.quick button { width: 34px; height: 22px; justify-content: center; gap: 4px; }
.quick .pair { justify-content: flex-end; padding-right: 1px; }
.quick .on { width: 31px; background: #edf4fd; border-radius: 4px; }
.quick .last { width: 18px; }
.more { width: 6px; height: 8px; }

.tabs { flex: none; display: flex; height: 30px; padding: 1px 0 0 8px; background: #fff; border-bottom: 1px solid #ececec; font-size: 13px; }
.tabs a { padding: 8px 3px 0; margin: 0 10px; height: 28px; white-space: nowrap; border-bottom: 2px solid transparent; }
.tabs .cur { color: var(--accent); font-weight: 700; border-color: var(--accent); }

.ribbon { flex: none; display: flex; height: 101px; padding: 2px 0; background: #fff; border-bottom: 1px solid #d4d4d4; overflow: hidden; }
.grp { flex: none; display: grid; grid-template: 72px 24px / 1fr; height: 95px; padding-top: 2px; border-right: 1px solid #dcdcdc; }
.grp .big { flex-direction: column; gap: 7px; width: 40px; height: 70px; margin: 1px 0 0 7px; padding-top: 2px; border-radius: 3px; background: #c2d9f2; }
.big svg { width: 24px; height: 28px; }
.cmds { display: grid; grid-auto-rows: 24px; align-content: start; }
.cmds button { gap: 3px; }
.lab { grid-column: 1 / -1; display: flex; align-items: center; justify-content: center; gap: 6px; white-space: nowrap; }
.lab .c { width: 8px; height: 8px; }
.g1 { width: 232px; grid-template-columns: 53px 1fr; }
.g1 .lab { padding-left: 4px; }
.g1 .cmds { grid-template-columns: 99px 1fr; }
.g2, .g3, .g4 { padding-left: 10px; }
.g2 .lab, .g3 .lab, .g4 .lab { padding-right: 10px; }
.g2 { width: 203px; }
.g2 .cmds { grid-template-columns: 79px 1fr; }
.g3 { width: 276px; }
.g3 .cmds { grid-template-columns: 67px 111px 1fr; }
.g4 { width: 237px; }
.g4 .cmds { grid-template-columns: 54px 54px 62px 1fr; }
.g5 { width: 69px; padding-left: 8px; }
.g5 .lab { padding-right: 4px; }
.g5 .cmds { grid-template-columns: 33px 1fr; }
.g6 { width: 80px; border: 0; }
.g6 .big { background: none; width: 56px; align-items: flex-start; }
.g6 .big svg { margin-left: 8px; }
.g6 .lab { justify-content: flex-start; padding-left: 16px; }

.combos { flex: none; display: flex; height: 31px; }
.combos label { display: flex; align-items: center; width: 100px; padding-right: 5px; border-right: 1px solid var(--line); }
.combos label:first-child { width: 99px; }
.combos select { flex: 1; min-width: 0; height: 30px; padding: 0 0 0 2px; border: 0; background: none; font: inherit; color: inherit; appearance: none; }

main { flex: 1; min-height: 0; display: flex; gap: 4px; }
.panel { background: #fff; border: 1px solid var(--line); min-height: 0; }
.panel header { flex: none; display: flex; align-items: center; height: 28px; padding-left: 6px; background: #ededf0; }
.panel h2 { padding-top: 2px; }
.grip { width: 7px; height: 14px; margin-right: 13px; }
.close { margin-left: auto; padding: 0 9px; height: 28px; }
.close svg { width: 10px; height: 10px; }

.nav { flex: none; width: 130px; display: flex; flex-direction: column; border-left: 0; }
.nav header { padding-left: 5px; }
.scroll { flex: 1; min-height: 0; display: flex; }
.tree { width: 117px; background: #f5f6f8; overflow: hidden; }
.cat { position: relative; display: flex; align-items: center; gap: 14px; height: 42px; padding: 2px 0 0 11px; }
.cat svg { width: 24px; height: 24px; }
.cat.cur { background: #eaebf0; color: #3f73e0; }
.cat.new::after { content: ""; position: absolute; left: 35px; top: 5px; width: 6px; height: 6px; border-radius: 50%; background: #f00; }
.tree ul { background: #fff; }
.tree li { height: 28px; padding: 7px 0 0 21px; }
.tree li .cur { color: #1183ff; }
.bar { flex: 1; padding: 275px 4px 12px; display: flex; }
.bar i { width: 4px; border-radius: 2px; background: #e8e8e8; }

.mid { flex: none; width: 322px; display: flex; flex-direction: column; gap: 4px; }
.comps { flex: 13 1 0; }
.comps header { align-items: stretch; }
.comps .grip { align-self: center; margin-right: 10px; }
.tab { padding: 7px 10px 5px; }
.tab.cur { background: #fff; color: var(--accent); }
.tools { display: flex; gap: 9px; padding: 7px 9px 7px 10px; }
.tools button { width: 32px; height: 26px; justify-content: center; background: #f4f4f4; border-radius: 3px; }
.tools .split { display: flex; gap: 1px; }
.tools .drop { width: 12px; }
.tools .ff { width: 26px; margin-left: auto; border: 1px solid #dcdcdc; }
.ff svg { width: 8px; height: 8px; }
.search { display: flex; align-items: center; height: 26px; margin: 0 9px 10px 8px; padding: 0 11px; border-radius: 13px; background: #f3f3f3; }
.search input { flex: 1; min-width: 0; border: 0; padding: 0; background: none; font: inherit; }
.search input::placeholder { color: #757575; }
.search svg { width: 12px; height: 12px; }
.items li { display: flex; align-items: center; height: 24px; padding-left: 6px; }
.items span { width: 106px; height: 21px; padding: 3px; border-radius: 2px; white-space: nowrap; }
.items .sel { background: #c2d9f2; }
.items .sub { padding-left: 29px; }

.layers { flex: 15 1 0; }
.layers .tools { padding: 6px; }
.layers table { width: 100%; table-layout: fixed; margin-top: 1px; }
.layers th, .layers td { height: 21px; padding: 0 4px; border: 1px solid var(--line); }
.layers tr > :first-child { border-left: 0; }
.layers tr > :last-child { border-right: 0; }
.layers .c1 { width: 50px; padding: 0; }
.layers .c2 { width: 36px; padding: 0; }
.mid-cell { text-align: center; }
.mid-cell .c { vertical-align: middle; margin-left: 4px; }
.layers input { display: block; width: 14px; height: 14px; margin: 0 auto; accent-color: #2a7de1; }

.props { flex: none; width: 238px; display: flex; flex-direction: column; }
.props table { width: 100%; table-layout: fixed; margin-top: 1px; }
.props th { height: 25px; padding: 0; background: #ededed; border-right: 1px solid var(--line); border-bottom: 1px solid var(--line); white-space: nowrap; }
.p1, .p2 { width: 101px; }
.props .p3 { border-right: 0; text-align: right; padding-right: 2px; }
.props td { height: 25px; padding: 0; white-space: nowrap; }
.props td:first-child { padding-left: 15px; }
.props .sec td { padding-left: 9px; background: #ececec; border-bottom: 1px solid #fff; }
.sec .c { margin: 0 7px 3px 0; vertical-align: middle; width: 5px; }
.props input, .swatch { display: block; width: 100px; height: 21px; padding: 0 2px; border: 1px solid #dcdcdc; background: #fff; font: inherit; color: inherit; }
.props .dim { color: #8a8a8a; }
.props .blue { color: #1a5cf0; }
.ring { display: block; width: 9px; height: 9px; margin-left: 15px; }
.props .swatch { padding: 1px 8px 3px 7px; }
.swatch i { display: block; width: 84px; height: 15px; background: #008000; border: 1px solid #333; }
.hbar { height: 4px; margin: auto 18px 4px 11px; border-radius: 2px; background: #e8e8e8; }

.view { flex: 1; min-width: 0; position: relative; background: #000; }
.cad { display: block; width: 100%; height: 100%; }
.num { font: 18px "Noto Sans CJK SC", sans-serif; fill: #fff; text-anchor: middle; }
.ucs { font: 16px "Noto Sans CJK SC", sans-serif; text-anchor: middle; }
.handle { position: absolute; left: 0; top: 380px; }
.handle svg { width: 16px; height: 62px; }
.pointer { position: absolute; left: 184px; top: -34px; width: 100px; height: 192px; }

.status { flex: none; display: flex; align-items: center; height: 29px; background: #fbfbfb; padding-top: 2px; white-space: nowrap; }
.s1 { width: 91px; padding-left: 1px; }
.s2 { width: 140px; }
.s3 { width: 110px; }
.s4 { width: 110px; }
.snap { display: flex; gap: 3px; margin-right: 17px; }
.snap button { width: 25px; height: 25px; justify-content: center; gap: 4px; border: 1px solid #8e9096; border-radius: 3px; background: #fff; }
.snap .wide { width: 36px; }
.snap .on { background: #d3e4fb; border-color: #3a83e0; }
.snap .far { margin-left: 3px; }
.hint { padding-left: 3px; }
```
